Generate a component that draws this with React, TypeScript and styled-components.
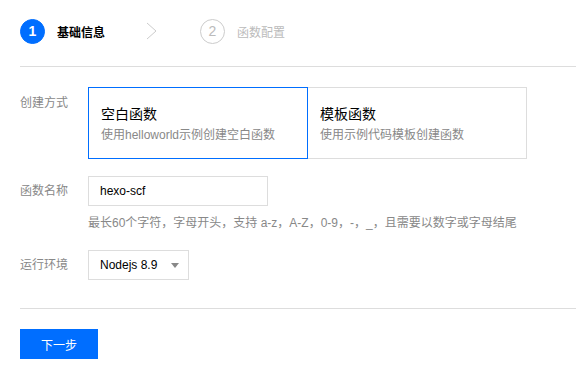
import * as React from "react";
import styled, { createGlobalStyle } from "styled-components";

const GlobalStyle = createGlobalStyle`
  html, body {
    margin: 0;
    padding: 0;
    background: #fff;
  }
  body {
    font-family: "Liberation Sans", Arial, "Noto Sans CJK SC", sans-serif;
    font-size: 12px;
    color: #000;
  }
`;

const Page = styled.div`
  width: 576px;
  height: 376px;
  overflow: hidden;
  padding-left: 20px;
  box-sizing: border-box;
`;

const StepsBar = styled.div`
  display: flex;
  align-items: center;
  height: 67px;
  border-bottom: 1px solid #ddd;
  box-sizing: border-box;
  padding-bottom: 4px;
`;

const Step = styled.div`
  display: flex;
  align-items: center;
  gap: 12px;
`;

const StepNum = styled.span<{ active?: boolean }>`
  width: 25px;
  height: 25px;
  border-radius: 50%;
  box-sizing: border-box;
  display: flex;
  align-items: center;
  justify-content: center;
  font-size: 14px;
  font-weight: ${p => (p.active ? "bold" : "normal")};
  background: ${p => (p.active ? "#006eff" : "#fff")};
  color: ${p => (p.active ? "#fff" : "#bbb")};
  border: 1px solid ${p => (p.active ? "#006eff" : "#ccc")};
`;

const StepText = styled.span<{ active?: boolean }>`
  font-size: 12px;
  font-weight: ${p => (p.active ? "bold" : "normal")};
  color: ${p => (p.active ? "#000" : "#bbb")};
`;

const Arrow = styled.svg`
  margin: 0 42px 0 41px;
  display: block;
`;

const Form = styled.div`
  padding-top: 20px;
`;

const Row = styled.div<{ gap?: number }>`
  display: flex;
  align-items: flex-start;
  margin-bottom: ${p => p.gap ?? 18}px;
`;

const Label = styled.div<{ top?: number }>`
  width: 68px;
  flex: none;
  color: #888;
  font-size: 12px;
  line-height: 18px;
  padding-top: ${p => p.top ?? 6}px;
`;

const Field = styled.div`
  display: flex;
  flex-direction: column;
`;

const Cards = styled.div`
  display: flex;
`;

const Card = styled.div<{ selected?: boolean }>`
  width: 220px;
  height: 72px;
  box-sizing: border-box;
  padding: 16px 12px 0;
  border: 1px solid ${p => (p.selected ? "#006eff" : "#ddd")};
  margin-left: ${p => (p.selected ? "0" : "-1px")};
  position: relative;
  z-index: ${p => (p.selected ? 1 : 0)};
`;

const CardTitle = styled.div`
  font-size: 14px;
  line-height: 20px;
  color: #000;
`;

const CardDesc = styled.div`
  font-size: 12px;
  line-height: 18px;
  color: #888;
  margin-top: 2px;
`;

const Input = styled.div`
  width: 180px;
  height: 30px;
  box-sizing: border-box;
  border: 1px solid #ddd;
  padding: 0 11px;
  display: flex;
  align-items: center;
  font-size: 12px;
  color: #000;
`;

const Hint = styled.div`
  color: #888;
  font-size: 12px;
  line-height: 18px;
  margin-top: 8px;
`;

const Select = styled.div`
  width: 101px;
  height: 30px;
  box-sizing: border-box;
  border: 1px solid #ddd;
  padding: 0 9px 0 11px;
  display: flex;
  align-items: center;
  justify-content: space-between;
  font-size: 12px;
  color: #000;
`;

const Caret = styled.span`
  width: 0;
  height: 0;
  border-left: 4px solid transparent;
  border-right: 4px solid transparent;
  border-top: 5px solid #888;
`;

const Footer = styled.div`
  border-top: 1px solid #ddd;
  margin-top: 28px;
  padding-top: 20px;
`;

const PrimaryButton = styled.button`
  width: 78px;
  height: 30px;
  border: none;
  background: #006eff;
  color: #fff;
  font-family: inherit;
  font-size: 12px;
  padding: 0;
  cursor: pointer;
`;

const App = () => {
  return (
    <>
      <GlobalStyle />
      <Page>
        <StepsBar>
          <Step>
            <StepNum active>1</StepNum>
            <StepText active>基础信息</StepText>
          </Step>
          <Arrow width="12" height="18" viewBox="0 0 12 18">
            <path d="M1 1 L10 9 L1 17" fill="none" stroke="#ccc" strokeWidth="1" />
          </Arrow>
          <Step>
            <StepNum>2</StepNum>
            <StepText>函数配置</StepText>
          </Step>
        </StepsBar>
        <Form>
          <Row gap={17}>
            <Label top={7}>创建方式</Label>
            <Cards>
              <Card selected>
                <CardTitle>空白函数</CardTitle>
                <CardDesc>使用helloworld示例创建空白函数</CardDesc>
              </Card>
              <Card>
                <CardTitle>模板函数</CardTitle>
                <CardDesc>使用示例代码模板创建函数</CardDesc>
              </Card>
            </Cards>
          </Row>
          <Row gap={18}>
            <Label>函数名称</Label>
            <Field>
              <Input>hexo-scf</Input>
              <Hint>最长60个字符，字母开头，支持 a-z，A-Z，0-9，-，_，且需要以数字或字母结尾</Hint>
            </Field>
          </Row>
          <Row gap={0}>
            <Label>运行环境</Label>
            <Select>
              <span>Nodejs 8.9</span>
              <Caret />
            </Select>
          </Row>
        </Form>
        <Footer>
          <PrimaryButton>下一步</PrimaryButton>
        </Footer>
      </Page>
    </>
  );
};

export default App;
